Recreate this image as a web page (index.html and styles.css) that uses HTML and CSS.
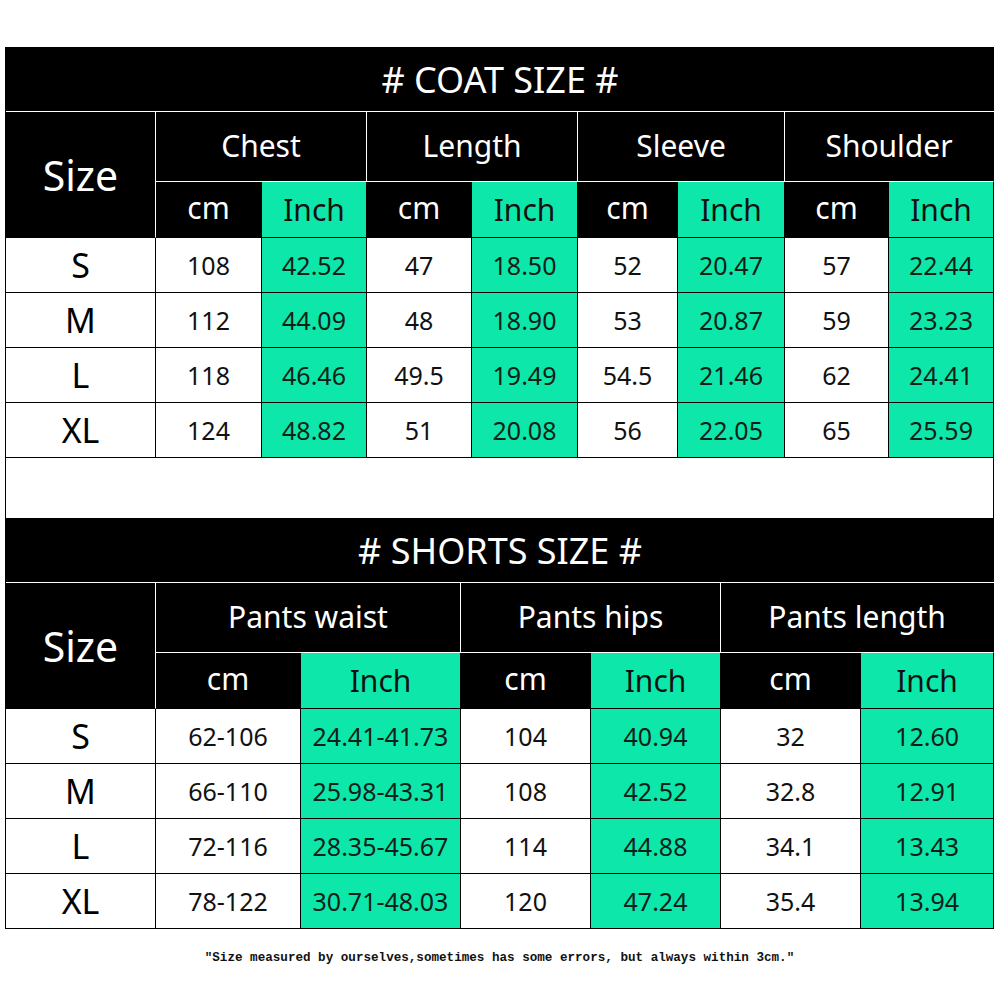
FILE: index.html
```html
<!DOCTYPE html>
<html lang="en">
<head>
<meta charset="utf-8">
<title>Size chart</title>
<link rel="stylesheet" href="styles.css">
</head>
<body>
<div class="chart">
  <table class="size-table">
    <colgroup>
      <col class="c150"><col class="c106"><col class="c105"><col class="c105"><col class="c106"><col class="c100"><col class="c107"><col class="c104"><col class="c105">
    </colgroup>
    <tr class="title-row"><th colspan="9" class="title"># COAT SIZE #</th></tr>
    <tr class="group-row">
      <th rowspan="2" class="size-head">Size</th>
      <th colspan="2" class="group">Chest</th>
      <th colspan="2" class="group">Length</th>
      <th colspan="2" class="group">Sleeve</th>
      <th colspan="2" class="group last">Shoulder</th>
    </tr>
    <tr class="unit-row">
      <th class="unit cm">cm</th><th class="unit inch">Inch</th>
      <th class="unit cm">cm</th><th class="unit inch">Inch</th>
      <th class="unit cm">cm</th><th class="unit inch">Inch</th>
      <th class="unit cm">cm</th><th class="unit inch">Inch</th>
    </tr>
    <tr class="data-row"><td class="size">S</td><td>108</td><td class="g">42.52</td><td>47</td><td class="g">18.50</td><td>52</td><td class="g">20.47</td><td>57</td><td class="g">22.44</td></tr>
    <tr class="data-row"><td class="size">M</td><td>112</td><td class="g">44.09</td><td>48</td><td class="g">18.90</td><td>53</td><td class="g">20.87</td><td>59</td><td class="g">23.23</td></tr>
    <tr class="data-row"><td class="size">L</td><td>118</td><td class="g">46.46</td><td>49.5</td><td class="g">19.49</td><td>54.5</td><td class="g">21.46</td><td>62</td><td class="g">24.41</td></tr>
    <tr class="data-row"><td class="size">XL</td><td>124</td><td class="g">48.82</td><td>51</td><td class="g">20.08</td><td>56</td><td class="g">22.05</td><td>65</td><td class="g">25.59</td></tr>
  </table>
  <div class="spacer"></div>
  <table class="size-table">
    <colgroup>
      <col class="c150"><col class="c145"><col class="c160"><col class="c130"><col class="c130"><col class="c140"><col class="c133">
    </colgroup>
    <tr class="title-row"><th colspan="7" class="title"># SHORTS SIZE #</th></tr>
    <tr class="group-row">
      <th rowspan="2" class="size-head">Size</th>
      <th colspan="2" class="group">Pants waist</th>
      <th colspan="2" class="group">Pants hips</th>
      <th colspan="2" class="group last">Pants length</th>
    </tr>
    <tr class="unit-row">
      <th class="unit cm">cm</th><th class="unit inch">Inch</th>
      <th class="unit cm">cm</th><th class="unit inch">Inch</th>
      <th class="unit cm">cm</th><th class="unit inch">Inch</th>
    </tr>
    <tr class="data-row"><td class="size">S</td><td>62-106</td><td class="g">24.41-41.73</td><td>104</td><td class="g">40.94</td><td>32</td><td class="g">12.60</td></tr>
    <tr class="data-row"><td class="size">M</td><td>66-110</td><td class="g">25.98-43.31</td><td>108</td><td class="g">42.52</td><td>32.8</td><td class="g">12.91</td></tr>
    <tr class="data-row"><td class="size">L</td><td>72-116</td><td class="g">28.35-45.67</td><td>114</td><td class="g">44.88</td><td>34.1</td><td class="g">13.43</td></tr>
    <tr class="data-row"><td class="size">XL</td><td>78-122</td><td class="g">30.71-48.03</td><td>120</td><td class="g">47.24</td><td>35.4</td><td class="g">13.94</td></tr>
  </table>
  <p class="note">″Size measured by ourselves,sometimes has some errors, but always within 3cm.″</p>
</div>
</body>
</html>
```

FILE: styles.css
```css
html, body {
  margin: 0;
  padding: 0;
  background: #fff;
}
body {
  padding: 47px 0 0 5px;
  font-family: "Noto Sans", "Open Sans", sans-serif;
}
.chart {
  width: 989px;
}
.size-table {
  width: 989px;
  table-layout: fixed;
  border-collapse: separate;
  border-spacing: 0;
  border-left: 1px solid #000;
}
.c150 { width: 150px; }
.c106 { width: 106px; }
.c105 { width: 105px; }
.c100 { width: 100px; }
.c107 { width: 107px; }
.c104 { width: 104px; }
.c145 { width: 145px; }
.c160 { width: 160px; }
.c130 { width: 130px; }
.c140 { width: 140px; }
.c133 { width: 133px; }

.size-table th,
.size-table td {
  box-sizing: border-box;
  padding: 0;
  text-align: center;
  vertical-align: middle;
  font-weight: 400;
  white-space: nowrap;
}
.title {
  height: 65px;
  background: #000;
  color: #fff;
  font-size: 36px;
  border-bottom: 1px solid #fff;
}
.group-row th {
  height: 70px;
}
.size-head {
  background: #000;
  color: #fff;
  font-size: 41px;
  border-right: 1px solid #fff;
  border-bottom: 1px solid #000;
}
.group {
  background: #000;
  color: #fff;
  font-size: 30px;
  border-right: 1px solid #fff;
  border-bottom: 1px solid #fff;
  padding-bottom: 2px !important;
}
.group.last {
  border-right-color: #000;
}
.unit-row th {
  height: 56px;
}
.unit {
  font-size: 30px;
  border-right: 1px solid #000;
  border-bottom: 1px solid #000;
}
.unit.cm {
  background: #000;
  color: #fff;
  padding-bottom: 4px !important;
}
.unit.inch {
  background: #0de8aa;
  color: #111;
}
.data-row td {
  height: 55px;
  font-size: 25px;
  color: #111;
  border-right: 1px solid #000;
  border-bottom: 1px solid #000;
  background: #fff;
}
.data-row td.g {
  background: #0de8aa;
  color: #102019;
}
.data-row td.size {
  font-size: 34px;
  color: #000;
}
.spacer {
  height: 60px;
  box-sizing: border-box;
  border-left: 1px solid #000;
  border-right: 1px solid #000;
}
.note {
  margin: 22px 0 0;
  text-align: center;
  font-family: "Liberation Mono", "DejaVu Sans Mono", monospace;
  font-size: 12.6px;
  font-weight: 700;
  line-height: 14px;
  color: #111;
}
```
